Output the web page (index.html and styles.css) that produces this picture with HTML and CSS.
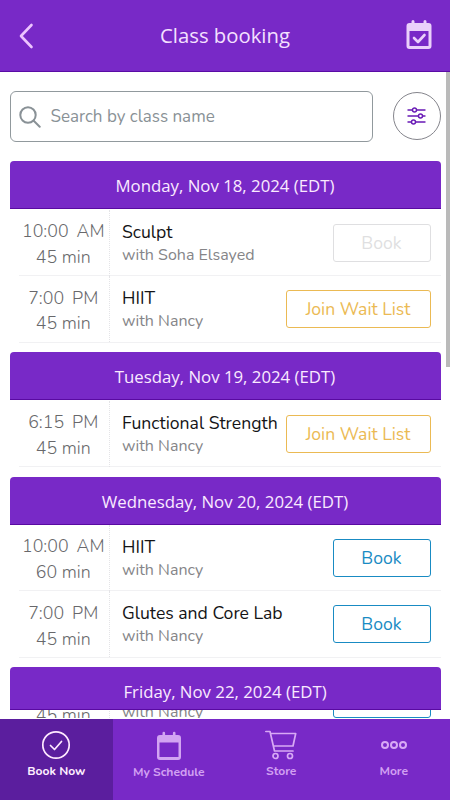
FILE: index.html
```html
<!DOCTYPE html>
<html lang="en">
  <head>
    <meta charset="UTF-8" />
    <meta name="viewport" content="width=device-width, initial-scale=1.0" />
    <title>Class booking</title>
    <link rel="stylesheet" href="styles.css">
  </head>
  <body>
    <header class="header">
      <svg class="back" width="16" height="28" viewBox="0 0 16 28"><path d="M13.500 3L3 14l10.500 11" /></svg>
      <h1>Class booking</h1>
      <svg class="header-cal" width="26" height="30" viewBox="0 0 26 30">
        <path fill-rule="evenodd" d="M5.500 3V1.500a1.500 1.500 0 0 1 3 0V3h9V1.500a1.500 1.500 0 0 1 3 0V3H22.500q3 0 3 3v20q0 3-3 3h-19q-3 0-3-3V6q0-3 3-3zM3.500 11v15h19V11z" />
        <path class="tick" d="M8 18l4 4 6.500-7" />
      </svg>
    </header>

    <main class="content">
      <div class="search-row">
        <div class="search">
          <svg width="22" height="22" viewBox="0 0 22 22"><circle cx="9" cy="9" r="7.700" /><path d="M14.700 14.700l6 6" /></svg>
          <span>Search by class name</span>
        </div>
        <button class="filter">
          <svg width="20" height="18" viewBox="0 0 20 18">
            <path d="M1 3h4.500M9.500 3H18M1 9h10.500M15.500 9H18M1 15h3.500M8.500 15H18" />
            <circle cx="7.500" cy="3" r="2" /><circle cx="13.500" cy="9" r="2" /><circle cx="6.500" cy="15" r="2" />
          </svg>
        </button>
      </div>

      <section class="day">
        <h2>Monday, Nov 18, 2024 (EDT)</h2>
        <div class="class-row">
          <div class="time"><div class="clock"><span>10:00</span><span>AM</span></div><span class="duration">45 min</span></div>
          <div class="info"><div class="name">Sculpt</div><div class="teacher">with Soha Elsayed</div></div>
          <button class="btn btn-disabled">Book</button>
        </div>
        <div class="class-row">
          <div class="time"><div class="clock"><span>7:00</span><span>PM</span></div><span class="duration">45 min</span></div>
          <div class="info"><div class="name">HIIT</div><div class="teacher">with Nancy</div></div>
          <button class="btn btn-wait">Join Wait List</button>
        </div>
      </section>

      <section class="day">
        <h2>Tuesday, Nov 19, 2024 (EDT)</h2>
        <div class="class-row">
          <div class="time"><div class="clock"><span>6:15</span><span>PM</span></div><span class="duration">45 min</span></div>
          <div class="info"><div class="name">Functional Strength</div><div class="teacher">with Nancy</div></div>
          <button class="btn btn-wait">Join Wait List</button>
        </div>
      </section>

      <section class="day">
        <h2>Wednesday, Nov 20, 2024 (EDT)</h2>
        <div class="class-row">
          <div class="time"><div class="clock"><span>10:00</span><span>AM</span></div><span class="duration">60 min</span></div>
          <div class="info"><div class="name">HIIT</div><div class="teacher">with Nancy</div></div>
          <button class="btn btn-book">Book</button>
        </div>
        <div class="class-row">
          <div class="time"><div class="clock"><span>7:00</span><span>PM</span></div><span class="duration">45 min</span></div>
          <div class="info"><div class="name">Glutes and Core Lab</div><div class="teacher">with Nancy</div></div>
          <button class="btn btn-book">Book</button>
        </div>
      </section>

      <section class="day day-last">
        <h2>Friday, Nov 22, 2024 (EDT)</h2>
        <!-- row scrolled under the day heading -->
        <div class="under">
          <div class="class-row">
            <div class="time"><span class="duration">45 min</span></div>
            <div class="info"><div class="teacher">with Nancy</div></div>
            <button class="btn btn-book"></button>
          </div>
        </div>
      </section>
      <div class="scrollbar"></div>
    </main>

    <nav class="tabs">
      <a class="tab active">
        <svg width="30" height="30" viewBox="0 0 30 30"><circle cx="15" cy="15" r="13.200" /><path d="M9.500 15.500l4 4 7-8" /></svg>
        <span>Book Now</span>
      </a>
      <a class="tab tab-schedule">
        <svg class="solid" width="26" height="29" viewBox="0 0 26 29">
          <path fill-rule="evenodd" d="M6.500 3.500V1.500a1.300 1.300 0 0 1 2.600 0v2h7.800v-2a1.300 1.300 0 0 1 2.600 0v2H22q3 0 3 3v19q0 3-3 3H4q-3 0-3-3v-19q0-3 3-3zM3.500 11v14.500h19V11z" />
        </svg>
        <span>My Schedule</span>
      </a>
      <a class="tab">
        <svg width="32" height="30" viewBox="0 0 32 30"><path d="M.8 1.500h4.200l4.500 19.500h18.500M5.700 3.500h25L28 16H8.500" /><circle cx="10.500" cy="26" r="2.500" /><circle cx="25" cy="26" r="2.500" /></svg>
        <span>Store</span>
      </a>
      <a class="tab">
        <svg class="dots" width="28" height="30" viewBox="0 0 28 30"><circle cx="5" cy="15" r="3" /><circle cx="14" cy="15" r="3" /><circle cx="23" cy="15" r="3" /></svg>
        <span>More</span>
      </a>
    </nav>
  </body>
</html>
```

FILE: styles.css
```css
* {
  margin: 0;
  padding: 0;
  box-sizing: border-box;
}

body {
  width: 450px;
  height: 800px;
  display: flex;
  flex-direction: column;
  font-family: Nunito, Lato, "Open Sans", sans-serif;
  background: #fff;
  overflow: hidden;
}

svg {
  display: block;
  fill: none;
  stroke-linecap: round;
  stroke-linejoin: round;
}

button {
  font-family: inherit;
  background: #fff;
}

.header {
  height: 72px;
  flex: none;
  display: flex;
  align-items: center;
  justify-content: space-between;
  padding: 0 18px;
  background: #7829c7;
  border-bottom: 1px solid #5a0ba5;
}

.header h1 {
  margin: -2px 0 0 10px;
  font-family: "Open Sans", sans-serif;
  font-size: 20.3px;
  font-weight: 400;
  color: #f4e0ff;
}

.back {
  margin-top: 1px;
  stroke: #edc4ff;
  stroke-width: 2.6;
}

.header-cal {
  margin-top: -1px;
  fill: #ead0fb;
}

.header-cal .tick {
  fill: none;
  stroke: #ead0fb;
  stroke-width: 2.6;
}

.content {
  position: relative;
  flex: 1;
  min-height: 0;
  padding: 19px 9.5px 0;
  overflow: hidden;
}

.search-row {
  display: flex;
  align-items: center;
  justify-content: space-between;
  height: 51px;
  margin-bottom: 19.4px;
}

.search {
  width: 363.5px;
  height: 51px;
  display: flex;
  align-items: center;
  gap: 10px;
  padding-left: 8px;
  border: 1px solid #91999d;
  border-radius: 6px;
  color: #899196;
  font-size: 17px;
}

.search svg {
  stroke: #899196;
  stroke-width: 2;
}

.filter {
  width: 48px;
  height: 48px;
  margin-top: -2px;
  display: flex;
  align-items: center;
  justify-content: center;
  border: 1px solid #85858c;
  border-radius: 50%;
}

.filter svg {
  stroke: #6819b5;
  stroke-width: 1.4;
}

.day {
  margin-bottom: 9.7px;
}

.day h2 {
  height: 48px;
  line-height: 49px;
  font-family: "Open Sans", sans-serif;
  font-size: 16.8px;
  font-weight: 400;
  text-align: center;
  color: #faeaff;
  background: #7829c7;
  border-bottom: 1px solid #590aa1;
  border-radius: 4px 4px 0 0;
}

.class-row {
  display: flex;
  align-items: center;
  height: 66.6px;
  padding-right: 10px;
  background: linear-gradient(#f1f1f3, #f1f1f3) 9px 100% / 100% 1px no-repeat;
}

.time {
  width: 100.5px;
  height: 66px;
  flex: none;
  display: flex;
  flex-direction: column;
  align-items: center;
  padding: 9.5px 0 0 8px;
  border-right: 1px dotted #e4e4e7;
  color: #68686b;
  font-size: 17.8px;
  font-weight: 300;
  line-height: 25.7px;
  white-space: nowrap;
}

.clock {
  display: flex;
  gap: 8px;
}

.info {
  flex: 1;
  min-width: 0;
  height: 66px;
  padding: 11px 0 0 12px;
  white-space: nowrap;
}

.name {
  font-size: 17.6px;
  line-height: 23px;
  color: #141416;
}

.teacher {
  font-size: 16px;
  line-height: 22px;
  color: #858588;
}

.btn {
  width: 98px;
  height: 38px;
  flex: none;
  border: 1px solid;
  border-radius: 3px;
  font-size: 17.6px;
}

.btn-disabled {
  color: #dfdfe1;
}

.btn-wait {
  width: 145px;
  color: #ebba54;
}

.btn-book {
  color: #198bc3;
}

.day-last h2 {
  height: 43px;
}

.under {
  height: 8px;
  overflow: hidden;
}

.under .class-row {
  margin-top: -44.5px;
}

.under .time {
  padding-top: 36.5px;
}

.under .info {
  padding-top: 35px;
}

/* custom scroll thumb over the list */
.scrollbar {
  position: absolute;
  top: 0;
  right: 0;
  width: 4.5px;
  height: 295px;
  background: #bababa;
}

.tabs {
  display: flex;
  flex: none;
  height: 81.5px;
  background: #7829c7;
}

.tab {
  flex: 1;
  display: flex;
  flex-direction: column;
  align-items: center;
  padding-top: 11px;
  color: #d2a0f2;
  font-size: 12.1px;
  font-weight: 700;
  line-height: 16px;
}

.tab svg {
  height: 30px;
  margin-bottom: 3px;
  stroke: #d8a9f5;
  stroke-width: 1.7;
}

.tab .solid {
  fill: #d2a4f2;
  stroke: none;
}

.tab .dots {
  stroke-width: 2;
}

.tab-schedule {
  padding-top: 12.5px;
}

.active {
  background: #5b1e9e;
  color: #fff0ff;
}

.active svg {
  stroke: #ffeaff;
}
```
